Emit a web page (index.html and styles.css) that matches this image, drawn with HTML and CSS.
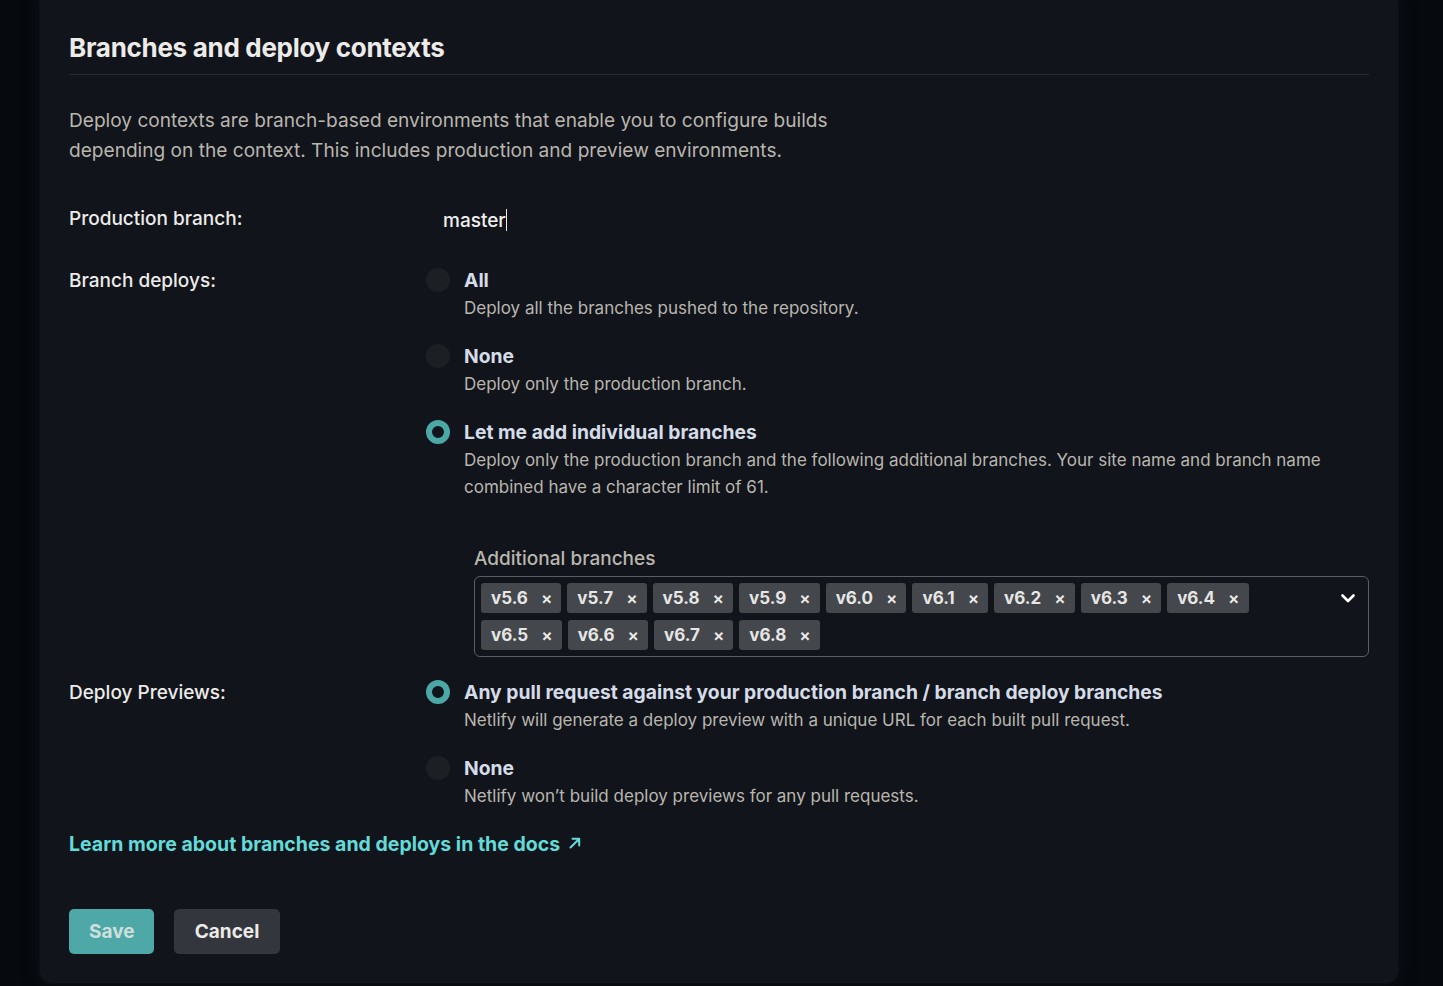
FILE: index.html
```html
<!DOCTYPE html>
<html lang="en">
<head>
<meta charset="utf-8">
<title>Branches and deploy contexts</title>
<link rel="stylesheet" href="styles.css">
</head>
<body>
<div class="page">
  <section class="card">
    <h2 class="card-title">Branches and deploy contexts</h2>
    <p class="intro">Deploy contexts are branch-based environments that enable you to configure builds depending on the context. This includes production and preview environments.</p>

    <div class="field field-prod">
      <div class="label">Production branch:</div>
      <div class="control">
        <div class="text-input">master<span class="caret"></span></div>
      </div>
    </div>

    <div class="field field-branch">
      <div class="label options-label">Branch deploys:</div>
      <div class="control options">
        <div class="option">
          <span class="radio"></span>
          <div class="option-body">
            <div class="option-title">All</div>
            <div class="option-desc">Deploy all the branches pushed to the repository.</div>
          </div>
        </div>
        <div class="option">
          <span class="radio"></span>
          <div class="option-body">
            <div class="option-title">None</div>
            <div class="option-desc">Deploy only the production branch.</div>
          </div>
        </div>
        <div class="option">
          <span class="radio checked"></span>
          <div class="option-body">
            <div class="option-title">Let me add individual branches</div>
            <div class="option-desc">Deploy only the production branch and the following additional branches. Your site name and branch name combined have a character limit of 61.</div>
          </div>
        </div>
        <div class="branches">
          <div class="branches-label">Additional branches</div>
          <div class="multiselect">
            <div class="tags">
              <span class="tag">v5.6<span class="x">×</span></span>
              <span class="tag">v5.7<span class="x">×</span></span>
              <span class="tag">v5.8<span class="x">×</span></span>
              <span class="tag">v5.9<span class="x">×</span></span>
              <span class="tag">v6.0<span class="x">×</span></span>
              <span class="tag">v6.1<span class="x">×</span></span>
              <span class="tag">v6.2<span class="x">×</span></span>
              <span class="tag">v6.3<span class="x">×</span></span>
              <span class="tag">v6.4<span class="x">×</span></span>
              <span class="tag">v6.5<span class="x">×</span></span>
              <span class="tag">v6.6<span class="x">×</span></span>
              <span class="tag">v6.7<span class="x">×</span></span>
              <span class="tag">v6.8<span class="x">×</span></span>
            </div>
            <svg class="chevron" width="16" height="16" viewBox="0 0 16 16"><path d="M2.5 5.5 L8 11 L13.5 5.5" fill="none" stroke="#ffffff" stroke-width="2.6" stroke-linecap="round" stroke-linejoin="round"/></svg>
          </div>
        </div>
      </div>
    </div>

    <div class="field">
      <div class="label options-label">Deploy Previews:</div>
      <div class="control options">
        <div class="option">
          <span class="radio checked"></span>
          <div class="option-body">
            <div class="option-title">Any pull request against your production branch / branch deploy branches</div>
            <div class="option-desc">Netlify will generate a deploy preview with a unique URL for each built pull request.</div>
          </div>
        </div>
        <div class="option">
          <span class="radio"></span>
          <div class="option-body">
            <div class="option-title">None</div>
            <div class="option-desc">Netlify won’t build deploy previews for any pull requests.</div>
          </div>
        </div>
      </div>
    </div>

    <a class="docs-link" href="#">Learn more about branches and deploys in the docs<svg class="ext" width="14" height="14" viewBox="0 0 14 14"><path d="M2.5 11.5 L11 3 M4.5 2.8 H11.2 V9.5" fill="none" stroke="#62dbd9" stroke-width="2" stroke-linecap="round" stroke-linejoin="round"/></svg></a>

    <div class="actions">
      <button class="btn btn-save">Save</button>
      <button class="btn btn-cancel">Cancel</button>
    </div>
  </section>
</div>
</body>
</html>
```

FILE: styles.css
```css
* { box-sizing: border-box; }
html, body { margin: 0; padding: 0; }
body {
  background: #06090d;
  font-family: Inter, "Noto Sans", sans-serif;
  color: #d5dbe4;
  height: 986px;
  overflow: hidden;
}
.page {
  padding: 0 45px 0 40px;
}
.card {
  background: #11141b;
  border-radius: 12px;
  margin-top: -12px;
  height: 995px;
  padding: 42px 29px 0 29px;
  box-shadow: 0 0 0 1px #0c0f14, 0 0 14px 4px #0b0e13;
}
.card-title {
  margin: 0;
  font-size: 26px;
  font-weight: 700;
  letter-spacing: -0.3px;
  color: #ecebe8;
  line-height: 36px;
  padding-bottom: 8px;
  border-bottom: 1px solid #262a31;
}
.intro {
  margin: 30px 0 0 0;
  max-width: 800px;
  font-size: 19.1px;
  line-height: 30px;
  color: #b9b6ae;
}
.field {
  display: grid;
  grid-template-columns: 357px 1fr;
}
.field-prod { margin-top: 40px; }
.field-branch { margin-top: 31px; }
.label {
  font-size: 19px;
  line-height: 28px;
  color: #ecebe8;
  font-weight: 500;
}
.options-label { padding-top: 1px; }
.text-input {
  font-size: 19px;
  line-height: 28px;
  color: #f0efec;
  font-weight: 500;
  padding-left: 17px;
  padding-top: 2px;
}
.caret {
  display: inline-block;
  width: 1px;
  height: 22px;
  background: #f0efec;
  vertical-align: -4px;
}
.options { display: flex; flex-direction: column; }
.option {
  display: flex;
  gap: 14px;
  margin-bottom: 20px;
}
.radio {
  flex: none;
  width: 24px;
  height: 24px;
  border-radius: 50%;
  background: #1c1f24;
  margin-top: 2px;
}
.radio.checked {
  background: #11141b;
  border: 6.5px solid #4ca8a6;
}
.option-title {
  font-size: 19.3px;
  line-height: 28px;
  font-weight: 700;
  color: #d5dce7;
}
.option-desc {
  font-size: 17px;
  line-height: 27px;
  color: #b9b6ae;
  padding-top: 1px;
}
.branches {
  margin-left: 48px;
  margin-top: 24px;
  margin-bottom: 21px;
}
.branches-label {
  font-size: 19px;
  line-height: 28px;
  color: #b9b6ae;
  font-weight: 500;
  margin-bottom: 3px;
}
.multiselect {
  border: 1px solid #5a5e64;
  border-radius: 6px;
  display: flex;
  align-items: flex-start;
  padding: 6px 12px 6px 6px;
  min-height: 81px;
}
.tags {
  flex: 1;
  display: flex;
  flex-wrap: wrap;
  gap: 7px 6px;
  max-width: 780px;
}
.tag {
  display: inline-flex;
  align-items: center;
  height: 30px;
  padding: 0 9px 0 10px;
  background: #44474c;
  border-radius: 3px;
  font-size: 17px;
  font-weight: 700;
  color: #e6e6e4;
  gap: 13px;
}
.tag .x {
  font-size: 17px;
  font-weight: 600;
  color: #ecebe8;
}
.chevron {
  margin-left: auto;
  margin-top: 7px;
  flex: none;
}
.docs-link {
  display: inline-flex;
  align-items: center;
  gap: 8px;
  margin-top: 0;
  font-size: 19.5px;
  font-weight: 700;
  line-height: 28px;
  color: #62dbd9;
  text-decoration: none;
}
.ext { flex: none; margin-top: -2px; }
.actions {
  display: flex;
  gap: 20px;
  margin-top: 51px;
}
.btn {
  font-family: Inter, "Noto Sans", sans-serif;
  height: 45px;
  border: none;
  border-radius: 5px;
  font-size: 19px;
  font-weight: 700;
  padding: 0 20px;
}
.btn-save {
  background: #4da8a7;
  color: #cfdfdd;
  width: 85px;
}
.btn-cancel {
  background: #33363d;
  color: #ecebe8;
  width: 106px;
}
```
